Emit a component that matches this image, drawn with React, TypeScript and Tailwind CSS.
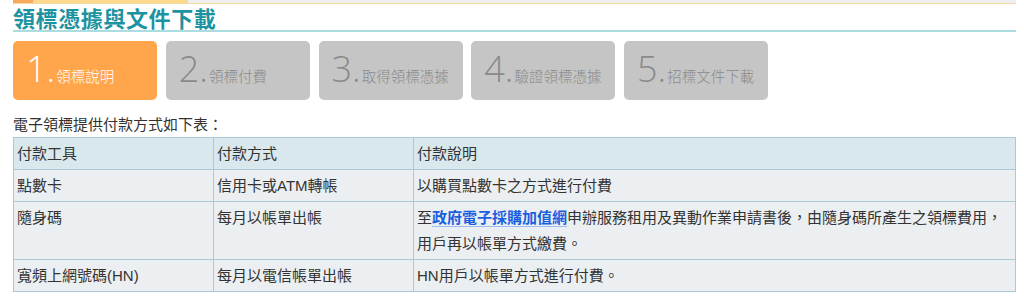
import React from 'react'

const steps = [
  { no: '1', label: '領標說明', active: true },
  { no: '2', label: '領標付費' },
  { no: '3', label: '取得領標憑據' },
  { no: '4', label: '驗證領標憑據' },
  { no: '5', label: '招標文件下載' },
]

const rows = [
  { tool: '點數卡', way: '信用卡或ATM轉帳', note: <>以購買點數卡之方式進行付費</> },
  {
    tool: '隨身碼',
    way: '每月以帳單出帳',
    note: (
      <>
        至
        <a href="#" className="font-bold text-[#1b5fe0] underline decoration-[#9dbcf2] underline-offset-[3px]">
          政府電子採購加值網
        </a>
        申辦服務租用及異動作業申請書後，由隨身碼所產生之領標費用，用戶再以帳單方式繳費。
      </>
    ),
  },
  { tool: '寬頻上網號碼(HN)', way: '每月以電信帳單出帳', note: <>HN用戶以帳單方式進行付費。</> },
]

function Step({ no, label, active }: { no: string; label: string; active?: boolean }) {
  return (
    <div
      className={
        active
          ? 'w-[144px] h-[59px] rounded-[5px] bg-[#ffa64d] text-white flex items-center pl-[13px]'
          : 'w-[144px] h-[59px] rounded-[5px] bg-[#c5c5c5] text-[#8a8a8a] flex items-center pl-[13px]'
      }
    >
      <div className="flex items-baseline mt-[-4px]">
        <span className="font-['Open_Sans',sans-serif] font-light text-[36px] leading-none">{no}.</span>
        <span className="font-['Noto_Sans_CJK_TC',sans-serif] font-light text-[14.5px] leading-none ml-[1px]">{label}</span>
      </div>
    </div>
  )
}

export default function App() {
  return (
    <div className="w-[1024px] h-[298px] bg-white pl-[13px] pr-[8px] overflow-hidden font-['Liberation_Sans','Noto_Sans_CJK_TC',sans-serif] text-[#333]">
      <div className="h-[4px] flex bg-[#eeeeee] border-b border-[#f3d9a4]">
        <div className="w-[20px] bg-[#f7aa5e]" />
        <div className="w-[155px] bg-[#fdd98e]" />
      </div>

      <h2 className="text-[22px] leading-[26px] font-bold tracking-[0.6px] text-[#1b93a0] border-b-2 border-[#abdde0] font-['Noto_Sans_CJK_TC',sans-serif]">
        領標憑據與文件下載
      </h2>

      <div className="flex gap-[8.75px] mt-[9px]">
        {steps.map((s) => (
          <Step key={s.no} {...s} />
        ))}
      </div>

      <p className="mt-[14px] text-[15px] leading-[22px]">電子領標提供付款方式如下表：</p>

      <table className="mt-[1px] w-full border-collapse text-[15px] leading-[26px]">
        <thead>
          <tr className="bg-[#d9e8ed]">
            <th className="w-[200px] border border-[#a9c9d6] px-[3px] pt-[3px] pb-[2px] text-left font-normal align-top">付款工具</th>
            <th className="w-[200px] border border-[#a9c9d6] px-[3px] pt-[3px] pb-[2px] text-left font-normal align-top">付款方式</th>
            <th className="border border-[#a9c9d6] px-[3px] pt-[3px] pb-[2px] text-left font-normal align-top">付款說明</th>
          </tr>
        </thead>
        <tbody>
          {rows.map((r) => (
            <tr key={r.tool} className="bg-[#ebeff1]">
              <td className="border border-[#a9c9d6] px-[3px] pt-[3px] pb-[2px] align-top">{r.tool}</td>
              <td className="border border-[#a9c9d6] px-[3px] pt-[3px] pb-[2px] align-top">{r.way}</td>
              <td className="border border-[#a9c9d6] pl-[3px] pr-[12px] pt-[3px] pb-[2px] align-top">{r.note}</td>
            </tr>
          ))}
        </tbody>
      </table>
    </div>
  )
}
